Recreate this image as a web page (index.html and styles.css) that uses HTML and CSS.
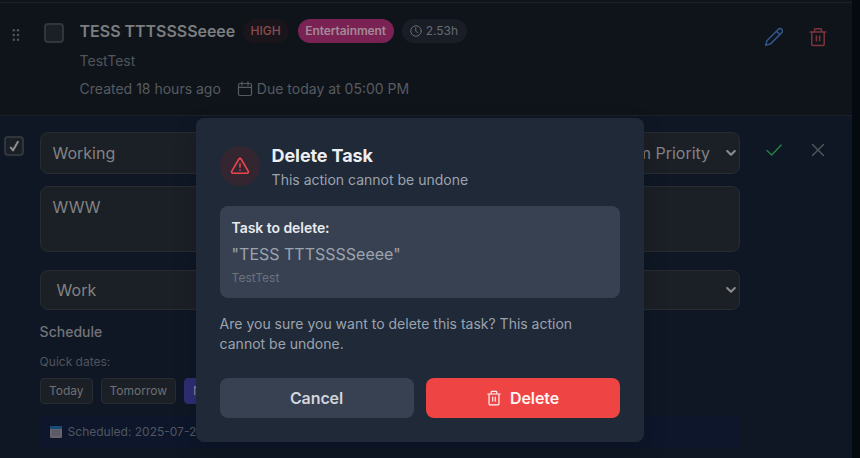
FILE: index.html
```html
<!DOCTYPE html>
<html lang="en">
<head>
<meta charset="utf-8">
<title>Tasks</title>
<link rel="stylesheet" href="styles.css">
</head>
<body>
<svg width="0" height="0" class="defs" aria-hidden="true">
  <symbol id="trash" viewBox="0 0 20 20"><path d="M2.3 5h15.4M16.2 5v12.5a1 1 0 0 1-1 1H4.8a1 1 0 0 1-1-1V5M6.5 4.7V2.7a1 1 0 0 1 1-1h5a1 1 0 0 1 1 1v2M8.4 9v4.8M11.6 9v4.8"/></symbol>
  <symbol id="chevron" viewBox="0 0 10 8"><path d="M1.2 2 5 5.8 8.8 2"/></symbol>
</svg>
<main class="tasks">
  <section class="task">
    <svg class="grip" viewBox="0 0 8 14"><circle cx="1.8" cy="2.2" r="1.25"/><circle cx="6" cy="2.2" r="1.25"/><circle cx="1.8" cy="7" r="1.25"/><circle cx="6" cy="7" r="1.25"/><circle cx="1.8" cy="11.8" r="1.25"/><circle cx="6" cy="11.8" r="1.25"/></svg>
    <span class="check"></span>
    <div class="info">
      <div class="heading">
        <h2 class="name">TESS TTTSSSSeeee</h2>
        <span class="pill high">HIGH</span>
        <span class="pill category">Entertainment</span>
        <span class="pill time"><svg class="icon clock" viewBox="0 0 24 24"><circle cx="12" cy="12" r="10.5"/><path d="M11.5 5.5V12l4 4"/></svg>2.53h</span>
      </div>
      <p class="note">TestTest</p>
      <div class="meta"><span>Created 18 hours ago</span><span class="due"><svg class="icon calendar" viewBox="0 0 16 16"><rect x="1.5" y="2.5" width="13" height="12" rx="1.5"/><path d="M1.5 6.3h13M5 .8v3.5M11 .8v3.5"/></svg>Due today at 05:00 PM</span></div>
    </div>
    <div class="actions">
      <svg class="icon edit" viewBox="0 0 24 24"><path d="M17 3a2.85 2.85 0 1 1 4 4L7.5 20.5 2 22l1.5-5.5ZM15 5l4 4"/></svg>
      <svg class="icon remove"><use href="#trash"/></svg>
    </div>
  </section>
  <section class="task editing">
    <span class="check checked"><svg viewBox="0 0 12 14"><path d="M2 8.2 4.4 11.2 9.6 2"/></svg></span>
    <div class="form">
      <div class="line">
        <div class="field grow">Working</div>
        <div class="field select priority">Medium Priority<svg class="chevron"><use href="#chevron"/></svg></div>
      </div>
      <div class="field area">WWW</div>
      <div class="field select work">Work<svg class="chevron"><use href="#chevron"/></svg></div>
      <h3 class="label">Schedule</h3>
      <p class="hint">Quick dates:</p>
      <div class="dates"><span class="date">Today</span><span class="date">Tomorrow</span><span class="date active">Next Week</span></div>
      <div class="scheduled"><svg class="day" viewBox="0 0 12 12"><rect width="12" height="12" rx="1.5" fill="#67636f"/><path d="M0 3V1.5Q0 0 1.5 0h9Q12 0 12 1.5V3z" fill="#174d78"/><path d="M2 5h8M2 7h8M2 9h8" stroke="#464754" stroke-width="1.2" stroke-dasharray="1.4 .8"/></svg>Scheduled: 2025-07-28</div>
    </div>
    <div class="actions">
      <svg class="icon save" viewBox="0 0 20 20"><path d="m3 10.5 4.7 4.5 9.5-10"/></svg>
      <svg class="icon close" viewBox="0 0 20 20"><path d="m4.5 4.5 11 11m0-11-11 11"/></svg>
    </div>
  </section>
</main>
<div class="modal" role="dialog">
  <header class="top">
    <span class="alert"><svg class="icon warning" viewBox="0 0 20 20"><path d="M8.9 3 1.7 15.4A1.2 1.2 0 0 0 2.8 17.2h14.4a1.2 1.2 0 0 0 1.1-1.8L11.1 3a1.3 1.3 0 0 0-2.2 0ZM10 7.9v3.2M10 14v.1"/></svg></span>
    <div><h1 class="title">Delete Task</h1><p class="subtitle">This action cannot be undone</p></div>
  </header>
  <div class="summary">
    <p class="caption">Task to delete:</p>
    <p class="quoted">"TESS TTTSSSSeeee"</p>
    <p class="detail">TestTest</p>
  </div>
  <p class="question">Are you sure you want to delete this task? This action cannot be undone.</p>
  <div class="buttons">
    <button class="button">Cancel</button>
    <button class="button danger"><svg class="icon"><use href="#trash"/></svg>Delete</button>
  </div>
</div>
</body>
</html>
```
FILE: styles.css
```css
* { box-sizing: border-box; }
body { margin: 0; height: 458px; overflow: hidden; background: #050910; font-family: Inter, sans-serif; font-size: 14px; line-height: 20px; color: #575b60; }
h1, h2, h3, p { margin: 0; }
svg { flex: none; display: block; }
.defs { position: absolute; }
.icon { width: 16px; height: 16px; }
.icon, .chevron, .check svg { fill: none; stroke: currentColor; stroke-width: 1.5; stroke-linecap: round; stroke-linejoin: round; }
.tasks { width: 852px; height: 458px; padding-top: 2px; background: #0f141a; overflow: hidden; }
.task { display: flex; height: 113px; border-top: 1px solid #1b2129; padding: 16px 24px 0 12px; }
.grip { width: 8px; height: 14px; margin: 9px 24px 0 0; fill: #50555b; }
.check { flex: none; display: grid; place-items: center; width: 20px; height: 20px; margin-top: 4px; border: 2px solid #31363e; border-radius: 4px; background: #1b1f26; color: #8a8b8c; }
.check svg { width: 11px; height: 13px; stroke-width: 2.3; }
.info { flex: 1; margin-left: 15.6px; }
.heading { display: flex; align-items: center; height: 24px; }
.name { width: 157px; font-size: 16px; line-height: 24px; font-weight: 600; letter-spacing: -.04px; color: #7c7e80; white-space: nowrap; }
.pill { display: flex; align-items: center; height: 24px; padding: 0 8px; border-radius: 12px; font-size: 12px; margin-left: 8px; font-weight: 500; }
.high { margin-left: 6px; color: #8a4b4f; background: #1a151b; }
.category { width: 96px; padding: 0 7.6px; margin-left: 9px; background: #7a2253; color: #a38997; font-weight: 600; letter-spacing: -.1px; }
.time { width: 65px; padding: 0 8px; background: #191e26; color: #676b71; font-weight: 400; margin-left: 8px; }
.clock { width: 12px; height: 12px; margin-right: 4px; stroke-width: 2; }
.note { margin-top: 8px; color: #50555b; }
.meta { display: flex; margin-top: 8px; gap: 16px; }
.due { display: flex; align-items: center; gap: 4px; }
.calendar { stroke-width: 1.2; }
.actions { display: flex; gap: 24px; padding-top: 8px; }
.actions .icon { width: 20px; height: 20px; }
.actions .edit { stroke-width: 1.9; }
.edit { color: #325487; }
.remove { color: #7e343c; }
.editing { height: 343px; background: #0f1724; padding: 16px 24px 0 4px; }
.form { width: 700px; margin-left: 16px; }
.line { display: flex; gap: 12px; margin-bottom: 12px; }
.field { display: flex; align-items: center; height: 42px; padding: 0 11.5px; border: 1px solid #282c32; border-radius: 8px; background: #1b1f26; color: #828384; font-size: 16px; }
.grow { flex: 1; }
.select { justify-content: space-between; padding: 0 3px 0 15.6px; }
.priority { width: 162px; padding-left: 11px; }
.chevron { width: 10px; height: 8px; color: #8b8b8c; stroke-width: 2.1; }
.area { height: 66px; align-items: flex-start; padding-top: 10px; }
.work { height: 40px; margin-top: 18px; }
.label { margin: 12px 0 0 -.4px; font-size: 14px; font-weight: 500; color: #727478; }
.hint { margin: 12px 0 8px -.4px; font-size: 12px; line-height: 16px; color: #4f545b; }
.dates { display: flex; gap: 8px; }
.date { height: 26px; padding: 0 8px; border: 1px solid #282c32; border-radius: 4px; background: #1b1f26; font-size: 12px; line-height: 24px; letter-spacing: -.02px; color: #6f7175; }
.active { background: #2f2d73; border-color: #2f2d73; color: #8783a5; }
.scheduled { display: flex; align-items: center; height: 32px; margin-top: 12px; padding: 0 10px; gap: 5.6px; border-radius: 4px; background: #0d162a; font-size: 12px; color: #505661; }
.day { width: 12px; height: 12px; }
.editing .actions { margin-left: 24px; }
.editing .save, .editing .close { stroke-width: 1.4; }
.save { color: #238047; }
.close { color: #53575e; }
.modal { position: absolute; left: 196px; top: 118px; width: 448px; height: 324px; padding: 24px; border-radius: 8px; background: #1f2937; box-shadow: 0 10px 24px rgba(0,0,0,.15); color: #9ca3af; }
.top { display: flex; align-items: center; gap: 11.6px; }
.alert { display: grid; place-items: center; width: 40px; height: 40px; border-radius: 50%; background: #342631; color: #ea464c; }
.warning { width: 20px; height: 20px; stroke-width: 1.6; }
.title { font-size: 18px; line-height: 28px; font-weight: 700; letter-spacing: -.1px; color: #eceef1; }
.summary { height: 92px; margin: 16px 0; padding: 12px 11.6px; border-radius: 8px; background: #374151; }
.caption { font-weight: 600; letter-spacing: -.06px; color: #e8eaee; }
.quoted { margin-top: 4px; font-size: 16px; line-height: 24px; }
.detail { margin-top: 4px; font-size: 12px; line-height: 16px; color: #6b7280; }
.question { margin-left: -.4px; }
.buttons { display: flex; gap: 12px; margin-top: 24px; }
.button { flex: 1; display: flex; align-items: center; justify-content: center; gap: 8px; height: 40px; border: 0; border-radius: 8px; background: #374151; color: #d1d5db; font: 600 16px/24px Inter, sans-serif; letter-spacing: -.1px; padding: 0 1px 0 0; }
.danger { background: #ef4444; color: #fff5f5; }
```
